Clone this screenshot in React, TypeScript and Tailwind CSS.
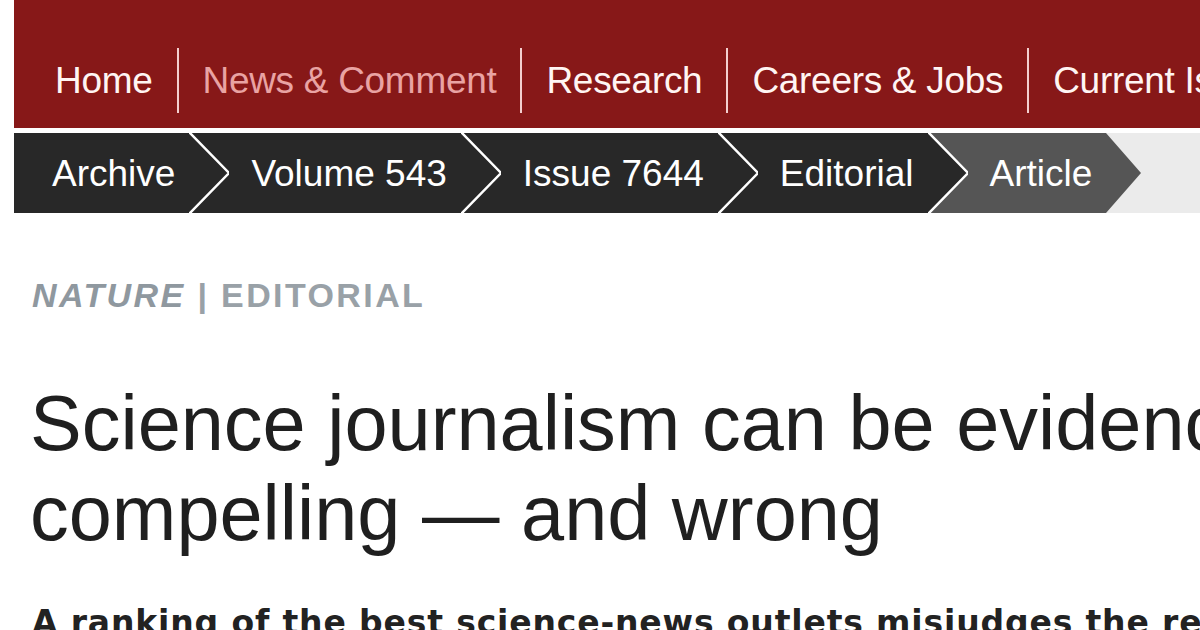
const navItems = ["Home", "News & Comment", "Research", "Careers & Jobs", "Current Issue"];

const crumbs = ["Archive", "Volume 543", "Issue 7644", "Editorial"];

const Chevron = ({ left, right, line = true }: { left: string; right: string; line?: boolean }) => (
  <svg width="40" height="80" viewBox="0 0 40 80" className="block shrink-0">
    <rect x="0" y="0" width="40" height="80" fill={right} />
    <polygon points="0,0 40,40 0,80" fill={left} />
    {line && <polyline points="0,-1 40,40 0,81" fill="none" stroke="#ffffff" strokeWidth="2.5" />}
  </svg>
);

const App = () => {
  return (
    <div className="w-[1200px] h-[630px] overflow-hidden bg-white font-['Liberation_Sans',Arial,sans-serif]">
      {/* top nav */}
      <div className="ml-[14px] h-[128px] bg-[#871818] flex items-end pb-[15px] pl-[17px] whitespace-nowrap">
        {navItems.map((item, i) => (
          <div key={item} className="flex items-center h-[65px]">
            {i > 0 && <div className="w-[2px] h-[65px] bg-[#f3cfcf]" />}
            <span
              className={
                "px-[24px] text-[37px] leading-none tracking-[-0.3px] " +
                (item === "News & Comment" ? "text-[#e9a3a3]" : "text-[#fff5f3]")
              }
            >
              {item}
            </span>
          </div>
        ))}
      </div>

      {/* breadcrumb */}
      <div className="ml-[14px] mt-[5px] h-[80px] bg-[#ebebeb] flex whitespace-nowrap">
        {crumbs.map((c, i) => (
          <div key={c} className="flex">
            <div
              className={
                "bg-[#282828] h-[80px] flex items-center pr-[14px] text-[37px] leading-none text-white " +
                (i === 0 ? "pl-[38px]" : "pl-[22px]")
              }
            >
              {c}
            </div>
            <Chevron left="#282828" right={i === crumbs.length - 1 ? "#555555" : "#282828"} />
          </div>
        ))}
        <div className="bg-[#555555] h-[80px] flex items-center pl-[22px] pr-[14px] text-[37px] leading-none text-white">
          Article
        </div>
        <svg width="35" height="80" viewBox="0 0 35 80" className="block shrink-0">
          <polygon points="0,0 35,40 0,80" fill="#555555" />
        </svg>
      </div>

      {/* article header */}
      <div className="mt-[65px] pl-[32px] h-[34px] flex text-[34px] leading-[34px] font-bold tracking-[2.4px] text-[#99a1a7] whitespace-nowrap">
        <span className="italic text-[#8f989f]">NATURE</span>
        <span className="ml-[12px] mr-[14px] tracking-normal">|</span>
        <span>EDITORIAL</span>
      </div>

      <h1 className="mt-[66px] pl-[30px] text-[77.5px] leading-[90px] font-normal text-[#1f1f1f] whitespace-nowrap">
        Science journalism can be evidence-based,
        <br />
        compelling — and wrong
      </h1>

      <p className="mt-[45px] pl-[32px] text-[33px] leading-[40px] font-bold tracking-[0.85px] text-[#222222] whitespace-nowrap font-['DejaVu_Sans',Verdana,sans-serif]">
        A ranking of the best science-news outlets misjudges the relative value of research.
      </p>
    </div>
  );
};

export default App;
